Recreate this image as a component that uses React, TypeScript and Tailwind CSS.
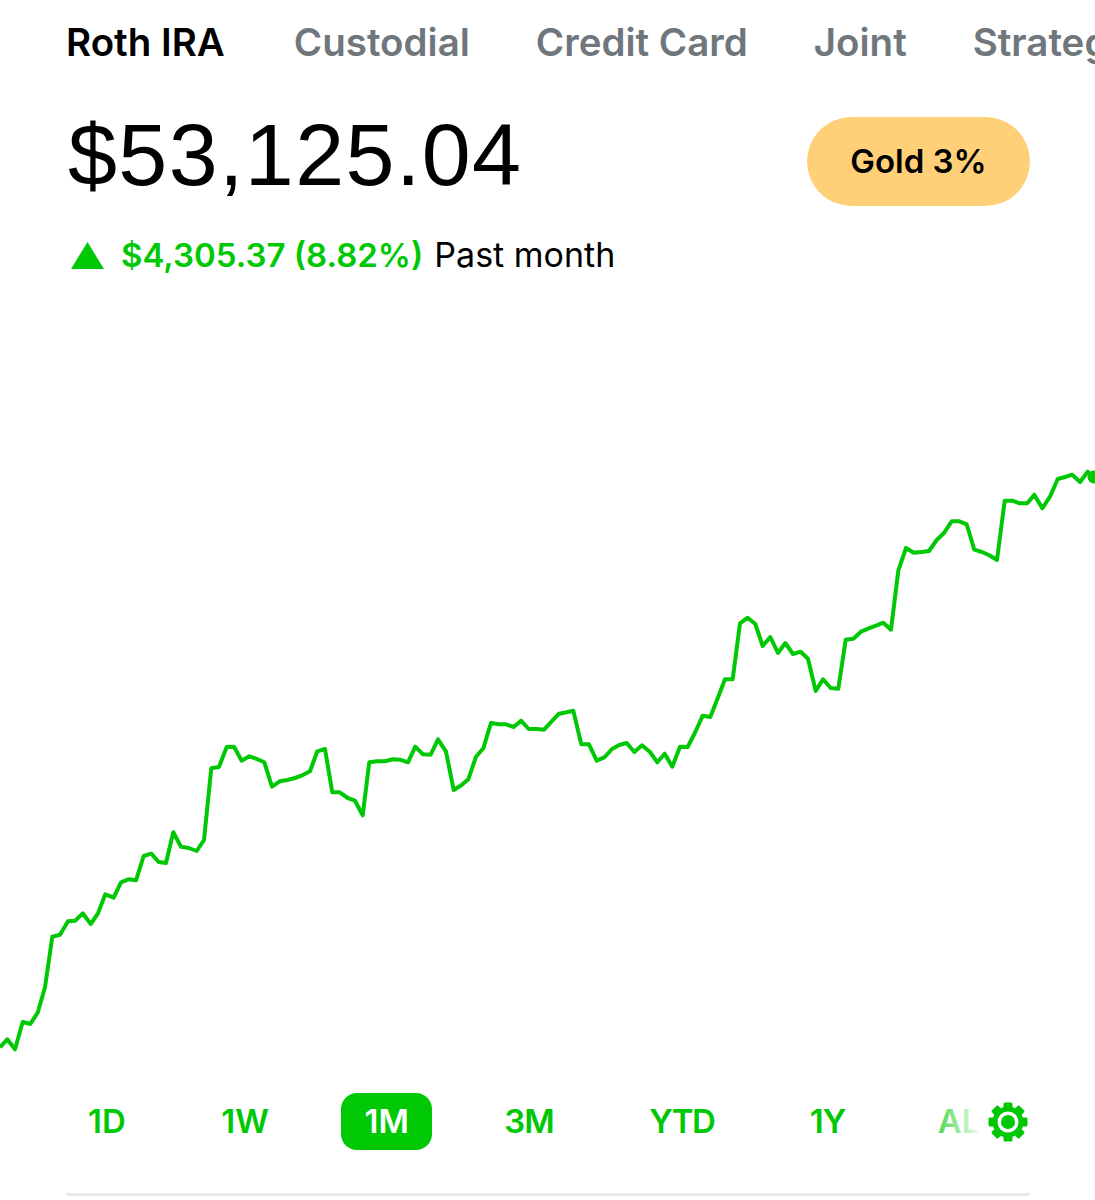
const tabs = ['Roth IRA', 'Custodial', 'Credit Card', 'Joint', 'Strategies'];
const ranges = ['1D', '1W', '1M', '3M', 'YTD', '1Y'];

// traced from three crops of the picture, each one at 3x
const seg1 = [[0,1042],[22,1018],[45,1048],[68,966],[91,972],[113,938],[135,862],[157,710],[180,704],[204,664],[226,662],[248,640],[272,672],[294,640],[316,583],[341,593],[363,547],[385,538],[408,541],[431,468],[454,461],[476,486],[498,489],[520,397],[543,440],[566,444],[590,453],[612,420],[634,205],[657,201],[680,141],[702,140],[725,182],[748,169],[771,177],[793,187],[816,260],[839,244],[862,240],[885,234],[907,226],[930,214],[952,154],[975,147],[997,277],[1019,277],[1043,294],[1065,302],[1088,346]];
const seg2 = [[28,487],[52,484],[75,484],[98,478],[120,479],[144,487],[166,440],[189,463],[212,464],[234,418],[258,455],[281,570],[304,556],[325,538],[348,470],[370,445],[393,369],[416,373],[438,373],[461,381],[483,362],[506,387],[530,387],[552,389],[575,364],[597,341],[620,337],[640,332],[664,433],[687,433],[710,482],[733,472],[756,447],[778,435],[800,429],[823,456],[846,436],[870,456],[892,487],[914,461],[937,500],[960,440],[983,441],[1006,396],[1028,347],[1051,351],[1073,295]];
const seg3 = [[15,688],[38,688],[60,520],[83,503],[106,522],[128,588],[151,561],[174,609],[196,579],[219,612],[242,605],[264,626],[287,723],[309,688],[332,714],[355,716],[377,569],[400,566],[423,545],[446,535],[468,527],[490,518],[513,539],[535,362],[558,294],[581,308],[604,306],[627,303],[650,270],[672,249],[695,214],[718,214],[740,223],[763,299],[786,306],[808,316],[831,330],[854,152],[877,152],[899,160],[922,160],[943,134],[967,175],[990,140],[1013,87],[1035,81],[1057,74],[1080,96],[1103,65],[1120,80]];

const place = (pts: number[][], ox: number, oy: number) =>
  pts.map(([x, y]) => `${(ox + x / 3).toFixed(1)},${(oy + y / 3).toFixed(1)}`);

const line = [
  ...place(seg1, 0, 700),
  ...place(seg2, 360, 600),
  ...place(seg3, 720, 450),
].join(' ');

function Gear() {
  return (
    <svg width="40" height="40" viewBox="0 0 40 40" className="shrink-0">
      {[0, 45, 90, 135].map((a) => (
        <rect key={a} x="15.5" y="0.5" width="9" height="39" rx="1.5" fill="#00c805" transform={`rotate(${a} 20 20)`} />
      ))}
      <circle cx="20" cy="20" r="15.5" fill="#00c805" />
      <circle cx="20" cy="20" r="10.5" fill="#fff" />
      <circle cx="20" cy="20" r="7" fill="#00c805" />
    </svg>
  );
}

export default function App() {
  return (
    <div className="w-[1095px] h-[1200px] overflow-hidden bg-white font-['Inter',sans-serif]">
      <div className="flex gap-[66px] pl-[66px] pt-[20px] h-[88px] whitespace-nowrap overflow-hidden text-[38.5px] leading-[44px] font-semibold text-[#6f767c]">
        {tabs.map((t, i) => (
          <div key={t} className={i === 0 ? 'text-black mr-[3px]' : ''}>{t}</div>
        ))}
      </div>

      <div className="flex items-start justify-between pl-[68px] pr-[65px] h-[118px]">
        <div className="font-['Liberation_Sans',sans-serif] text-[88px] tracking-[1.4px] leading-[118px] text-black mt-[8px]">$53,125.04</div>
        <div className="mt-[29px] w-[223px] h-[89px] rounded-full bg-[#ffd077] flex items-center justify-center text-[33px] font-semibold text-black">
          Gold 3%
        </div>
      </div>

      <div className="flex items-center pl-[71px] h-[48px] mt-[25px] whitespace-nowrap">
        <svg width="33" height="27" viewBox="0 0 33 27" className="mr-[17px] shrink-0">
          <polygon points="16.5,0 33,27 0,27" fill="#00c805" />
        </svg>
        <span className="font-semibold text-[33px] text-[#00c805] mt-[2px]">$4,305.37 (8.82%)</span>
        <span className="ml-[11px] text-[34px] text-black -mt-[2px]">Past month</span>
      </div>

      <svg width="1095" height="780" viewBox="0 300 1095 780" className="block mt-[21px]">
        <polyline points={line} fill="none" stroke="#00c805" strokeWidth="4" strokeLinejoin="round" />
        <circle cx="1094" cy="477" r="6.5" fill="#00c805" />
      </svg>

      <div className="flex items-center gap-[49.5px] pl-[65px] h-[57px] mt-[13px] text-[33px] font-semibold text-[#00c805] relative whitespace-nowrap">
        {ranges.map((r) => (
          <div key={r} className={`h-[57px] px-[23px] pt-[1px] flex items-center rounded-[16px] ${r === '1M' ? 'bg-[#00c805] text-white' : ''} ${r === 'YTD' ? 'tracking-[-1.5px]' : ''} ${r === '3M' || r === '1Y' ? 'tracking-[-1px]' : ''}`}>
            {r}
          </div>
        ))}
        <div className="relative h-[57px] flex items-center pl-[23px] pt-[1px] -ml-[3px]">
          <span>ALL</span>
          <div className="absolute left-[23px] top-0 h-[57px] w-[56px] bg-gradient-to-r from-white/30 to-white to-80%" />
        </div>
        <div className="absolute left-[988px] top-[9px]">
          <Gear />
        </div>
      </div>

      <div className="ml-[66px] w-[964px] h-[3px] mt-[43px] bg-[#e8ebee]" />
    </div>
  );
}
